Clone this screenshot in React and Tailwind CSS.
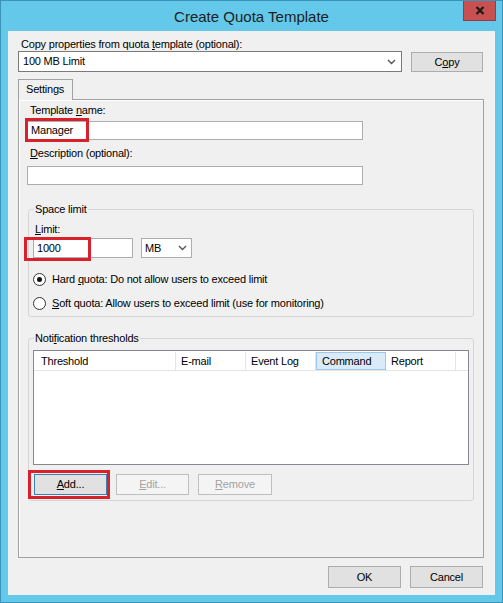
import React from 'react';

// mnemonic letter
const U = ({ children }) => <span className="underline underline-offset-[1px]">{children}</span>;

const Chevron = () => (
  <svg width="9" height="6" viewBox="0 0 9 6" className="shrink-0">
    <polyline points="1,1 4.5,4.5 8,1" fill="none" stroke="#555" strokeWidth="1.4" />
  </svg>
);

const Button = ({ children, className = '', disabled = false, focused = false }) => (
  <div
    className={`flex items-center justify-center border ${
      disabled
        ? 'border-[#bfbfbf] bg-[#f4f4f4] text-[#a3a3a3]'
        : focused
        ? 'border-[#3c7fb1] bg-[#e1e1e1] text-black'
        : 'border-[#adadad] bg-[#e1e1e1] text-black'
    } ${className}`}
  >
    {children}
  </div>
);

const Radio = ({ checked, children }) => (
  <div className="flex items-center h-[16px]">
    <div className="w-[13px] h-[13px] rounded-full border border-[#333] bg-white flex items-center justify-center">
      {checked && <div className="w-[5px] h-[5px] rounded-full bg-[#111]" />}
    </div>
    <span className="ml-[6px]">{children}</span>
  </div>
);

const columns = [
  { label: 'Threshold', w: 'w-[142px]', pad: 'pl-[7px]' },
  { label: 'E-mail', w: 'w-[70px]', pad: 'pl-[5px]' },
  { label: 'Event Log', w: 'w-[70px]', pad: 'pl-[5px]' },
  { label: 'Command', w: 'w-[70px]', pad: 'pl-[5px]', active: true },
  { label: 'Report', w: 'w-[70px]', pad: 'pl-[5px]' },
];

export default function App() {
  return (
    <div className="w-[503px] h-[603px] bg-[#63c8e9] border border-[#3a93b8] flex flex-col font-['Liberation_Sans',Arial,sans-serif] text-[11px] tracking-[-0.2px] leading-[13px] text-black overflow-hidden">
      {/* Title bar */}
      <div className="relative h-[30px] shrink-0 flex items-center justify-center">
        <span className="text-[15px] tracking-normal text-[#1e1e1e]">Create Quota Template</span>
        <div className="absolute top-[-1px] right-[6px] w-[33px] h-[21px] bg-[#c75050] border border-[#9a3d3d] flex items-center justify-center">
          <svg width="10" height="9" viewBox="0 0 10 9">
            <path d="M1.5 1 L8.5 8 M8.5 1 L1.5 8" stroke="#1a1a1a" strokeWidth="2.2" />
          </svg>
        </div>
      </div>

      {/* Client area */}
      <div className="mx-[7px] h-[564px] shrink-0 bg-[#f0f0f0] flex flex-col pl-[10px] pr-[12px]">
        <div className="mt-[7px] h-[13px] ml-[3px]">
          Copy properties from quota <U>t</U>emplate (optional):
        </div>
        <div className="flex items-start">
          <div className="w-[384px] h-[21px] bg-white border border-[#7a7a7a] flex items-center justify-between pl-[4px] pr-[5px]">
            <span>100 MB Limit</span>
            <Chevron />
          </div>
          <Button className="ml-[9px] mt-[1px] w-[72px] h-[20px]">
            C<U>o</U>py
          </Button>
        </div>

        {/* Tab */}
        <div className="mt-[7px] flex">
          <div className="relative z-10 w-[55px] h-[21px] -mb-px border border-b-0 border-[#a0a0a0] bg-[#f0f0f0] pl-[7px] pt-[3px]">
            Settings
          </div>
        </div>
        <div className="w-[466px] h-[459px] border border-[#a0a0a0] shadow-[inset_1px_1px_0_#ffffff] flex flex-col pl-[8px]">
          <div className="mt-[4px] ml-[3px]">
            Template <U>n</U>ame:
          </div>
          <div className="relative mt-[4px] w-[336px] h-[19px] bg-white border border-[#abadb3] flex items-center pl-[3px]">
            Manager
            <div className="absolute left-[-3px] top-[-4px] w-[64px] h-[24px] border-[3px] border-[#d8212b]" />
          </div>
          <div className="mt-[7px] ml-[3px]">
            <U>D</U>escription (optional):
          </div>
          <div className="mt-[6px] w-[336px] h-[19px] bg-white border border-[#abadb3]" />

          {/* Space limit */}
          <fieldset className="mt-[18px] ml-[1px] w-[446px] border border-[#d5d5d5] rounded-[3px] pl-[4px] pb-[5px]">
            <legend className="ml-[1px] px-[1px] leading-[13px]">Space limit</legend>
            <div className="mt-[7px] ml-[2px]">
              <U>L</U>imit:
            </div>
            <div className="mt-[2px] flex">
              <div className="relative w-[100px] h-[20px] bg-white border border-[#abadb3] flex items-center pl-[3px]">
                1000
                <div className="absolute left-[-10px] top-[-2px] w-[67px] h-[24px] border-[3px] border-[#d8212b]" />
              </div>
              <div className="ml-[8px] w-[51px] h-[20px] bg-white border border-[#abadb3] flex items-center justify-between pl-[3px] pr-[4px]">
                <span>MB</span>
                <Chevron />
              </div>
            </div>
            <div className="mt-[13px]">
              <Radio checked>
                Hard <U>q</U>uota: Do not allow users to exceed limit
              </Radio>
            </div>
            <div className="mt-[8px]">
              <Radio>
                <U>S</U>oft quota: Allow users to exceed limit (use for monitoring)
              </Radio>
            </div>
          </fieldset>

          {/* Notification thresholds */}
          <fieldset className="mt-[15px] ml-[1px] w-[446px] border border-[#d5d5d5] rounded-[3px] pl-[4px] pb-[5px]">
            <legend className="ml-[1px] px-[1px] leading-[13px]">
              Noti<U>f</U>ication thresholds
            </legend>
            <div className="mt-[5px] w-[436px] h-[115px] bg-white border border-[#828790] flex flex-col">
              <div className="h-[20px] pt-[1px] flex border-b border-[#e5e5e5]">
                {columns.map((c) => (
                  <div
                    key={c.label}
                    className={`${c.w} ${c.pad} h-full flex items-center ${
                      c.active
                        ? 'bg-[#d9ebf9] border border-[#9fc7ea]'
                        : 'border-r border-[#e5e5e5]'
                    }`}
                  >
                    {c.label}
                  </div>
                ))}
                <div className="flex-1" />
              </div>
            </div>
            <div className="mt-[9px] flex">
              <Button focused className="relative ml-[1px] w-[73px] h-[21px]">
                <span>
                  <U>A</U>dd...
                </span>
                <div className="absolute left-[-7px] top-[-5px] w-[82px] h-[29px] border-[3px] border-[#d8212b]" />
              </Button>
              <Button disabled className="ml-[9px] w-[73px] h-[21px]">
                <span>
                  <U>E</U>dit...
                </span>
              </Button>
              <Button disabled className="ml-[9px] w-[74px] h-[21px]">
                <span>
                  <U>R</U>emove
                </span>
              </Button>
            </div>
          </fieldset>
        </div>

        {/* OK / Cancel */}
        <div className="mt-[8px] flex justify-end">
          <Button className="w-[73px] h-[22px]">OK</Button>
          <Button className="ml-[9px] w-[73px] h-[22px]">Cancel</Button>
        </div>
      </div>
    </div>
  );
}
